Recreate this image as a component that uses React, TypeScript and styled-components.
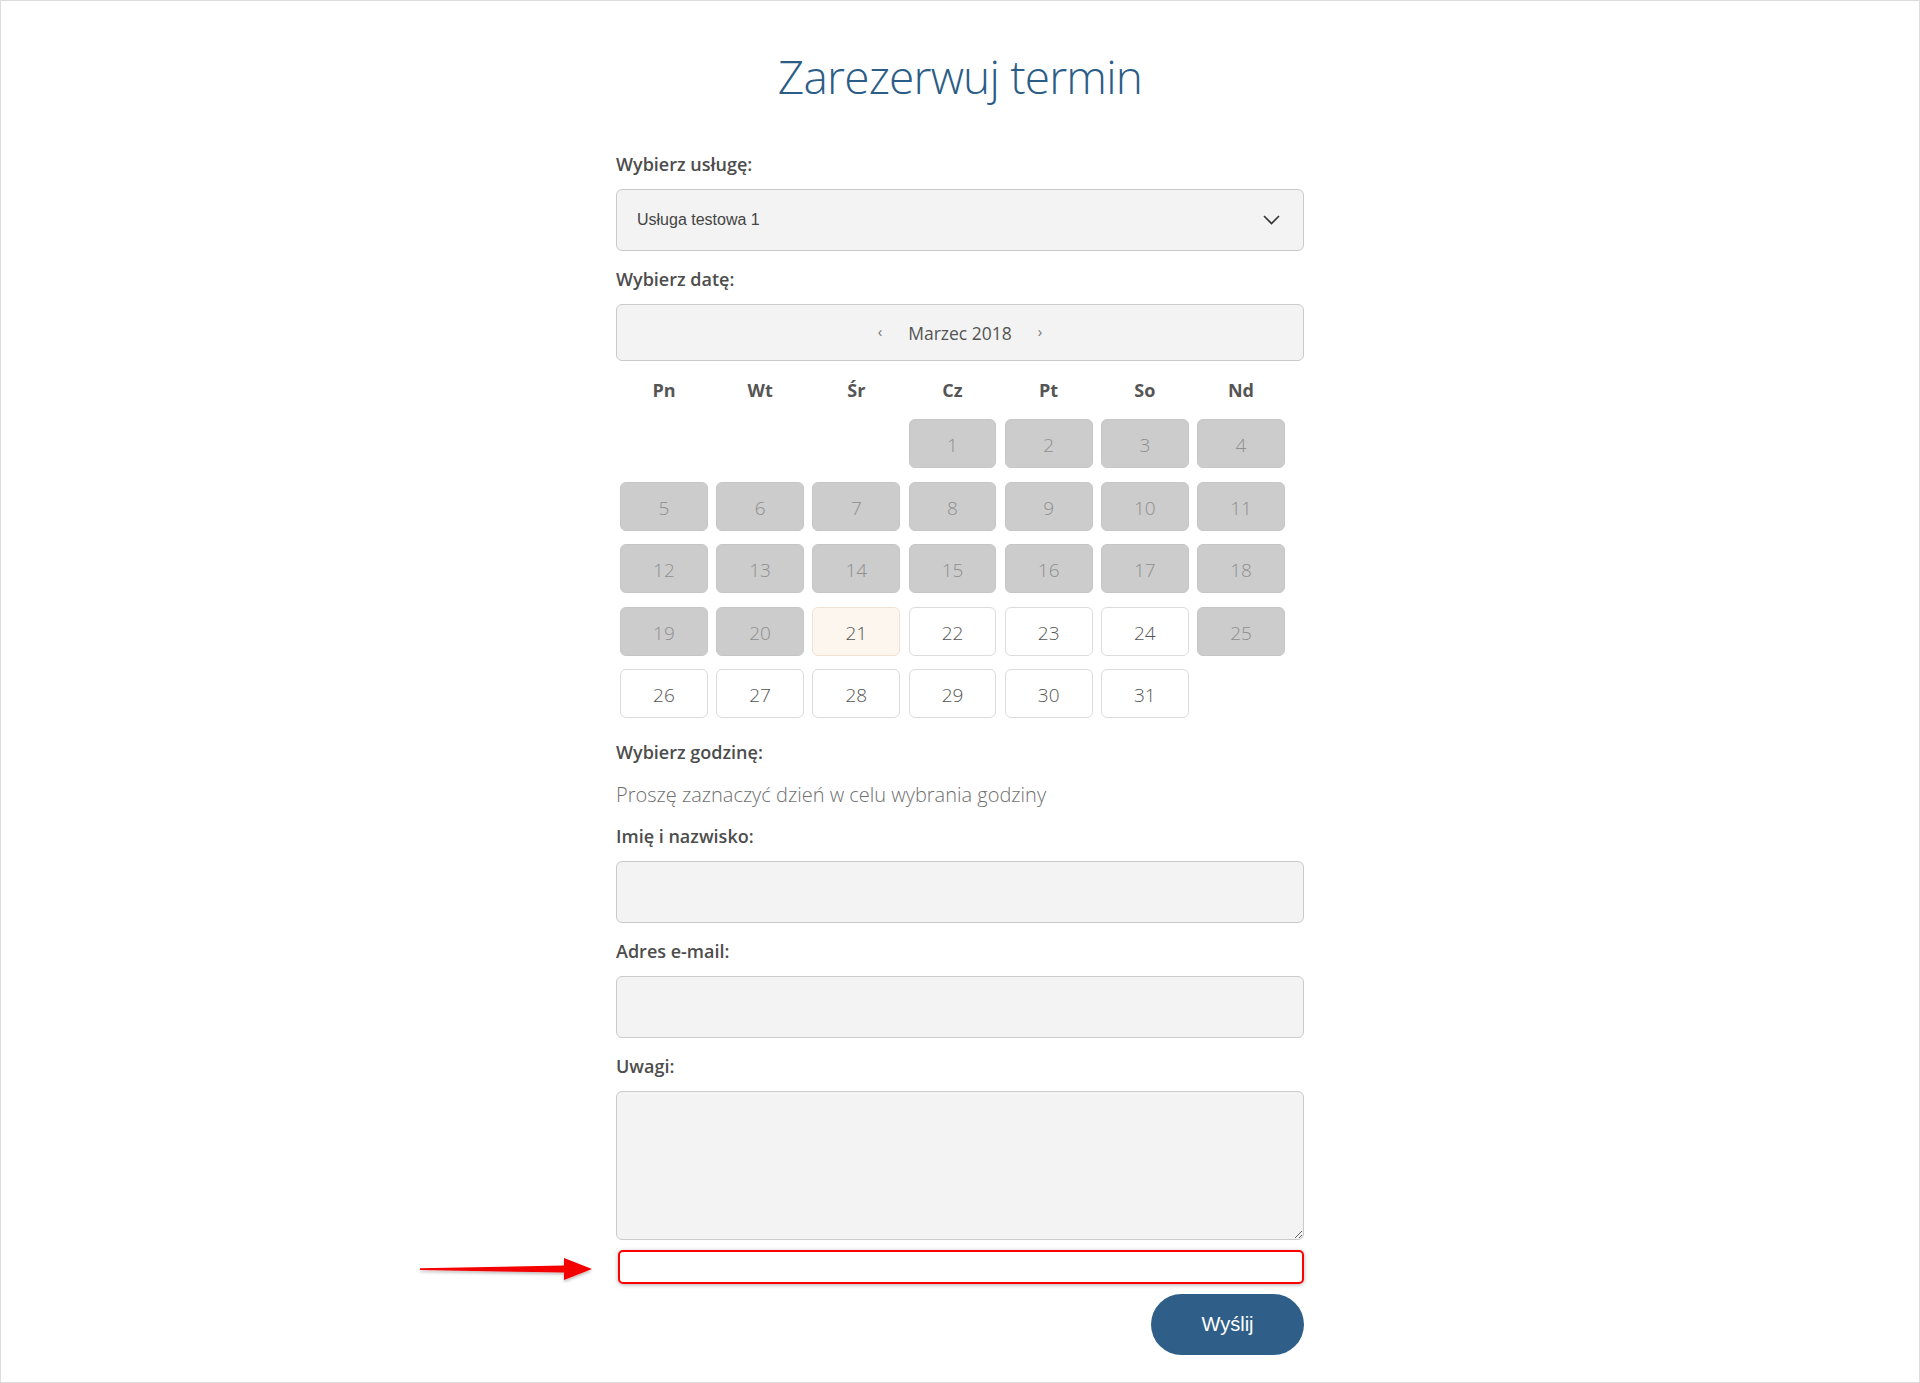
import * as React from "react";
import styled, { createGlobalStyle } from "styled-components";

type DayState = "off" | "today" | "free";

const weekdays = ["Pn", "Wt", "Śr", "Cz", "Pt", "So", "Nd"];

function dayState(day: number): DayState {
  if (day === 21) return "today";
  if (day < 21 || day === 25) return "off";
  return "free";
}

export default function App() {
  const days = Array.from({ length: 31 }, (_, i) => i + 1);

  return (
    <Page>
      <GlobalStyle />
      <Form>
        <Title>Zarezerwuj termin</Title>

        <Label $first>Wybierz usługę:</Label>
        <SelectBox>
          <span>Usługa testowa 1</span>
          <svg width="17" height="10" viewBox="0 0 17 10" fill="none">
            <path d="M1 1l7.5 7.5L16 1" stroke="#333" strokeWidth="1.6" />
          </svg>
        </SelectBox>

        <Label>Wybierz datę:</Label>
        <MonthBar>
          <NavArrow>‹</NavArrow>
          <MonthName>Marzec 2018</MonthName>
          <NavArrow>›</NavArrow>
        </MonthBar>

        <WeekHead>
          {weekdays.map((d) => (
            <WeekDay key={d}>{d}</WeekDay>
          ))}
        </WeekHead>
        <DayGrid>
          {[0, 1, 2].map((i) => (
            <Blank key={"b" + i} />
          ))}
          {days.map((d) => (
            <DayCell key={d} $state={dayState(d)}>
              {d}
            </DayCell>
          ))}
        </DayGrid>

        <Label $afterGrid>Wybierz godzinę:</Label>
        <Hint>Proszę zaznaczyć dzień w celu wybrania godziny</Hint>

        <Label>Imię i nazwisko:</Label>
        <Input type="text" />

        <Label>Adres e-mail:</Label>
        <Input type="email" />

        <Label>Uwagi:</Label>
        <TextArea />

        <MarkedBox>
          <Arrow width="176" height="28" viewBox="0 0 176 28">
            <defs>
              <filter id="sh" x="-10%" y="-40%" width="120%" height="180%">
                <feDropShadow dx="0" dy="2" stdDeviation="1.5" floodColor="#000" floodOpacity="0.25" />
              </filter>
            </defs>
            <path
              d="M2 13.2 L146 10.5 L146 3 L174 14 L146 25 L146 17.5 L2 15 Z"
              fill="#f40000"
              filter="url(#sh)"
            />
          </Arrow>
        </MarkedBox>

        <Actions>
          <SubmitButton type="button">Wyślij</SubmitButton>
        </Actions>
      </Form>
    </Page>
  );
}

const GlobalStyle = createGlobalStyle`
  html, body {
    margin: 0;
    padding: 0;
    background: #fff;
  }
  body {
    font-family: "Open Sans", "Liberation Sans", sans-serif;
  }
  * {
    box-sizing: border-box;
  }
`;

const Page = styled.div`
  min-height: 1383px;
  border: 1px solid #dcdcdc;
  padding-top: 47px;
  background: #fff;
`;

const Form = styled.div`
  width: 688px;
  margin: 0 auto;
`;

const Title = styled.h1`
  margin: 0;
  text-align: center;
  font-family: "Open Sans", sans-serif;
  font-weight: 300;
  font-size: 46px;
  line-height: 56px;
  letter-spacing: -0.8px;
  color: #2b5d87;
`;

const Label = styled.div<{ $first?: boolean; $afterGrid?: boolean }>`
  margin: ${(p) => (p.$first ? "48px" : p.$afterGrid ? "22px" : "16px")} 0 13px;
  font-family: "Open Sans", sans-serif;
  font-weight: 600;
  font-size: 18px;
  line-height: 24px;
  color: #4d4d4d;
`;

const fieldBox = `
  width: 100%;
  background: #f3f3f3;
  border: 1px solid #cacaca;
  border-radius: 6px;
`;

const SelectBox = styled.div`
  ${fieldBox}
  height: 62px;
  display: flex;
  align-items: center;
  justify-content: space-between;
  padding: 0 23px 0 20px;
  font-family: "Liberation Sans", Arial, sans-serif;
  font-size: 16px;
  color: #444;
`;

const MonthBar = styled.div`
  ${fieldBox}
  height: 57px;
  display: flex;
  align-items: center;
  justify-content: center;
  gap: 26px;
`;

const MonthName = styled.span`
  font-size: 17.5px;
  color: #555;
`;

const NavArrow = styled.span`
  font-size: 15px;
  color: #777;
  line-height: 1;
  padding-bottom: 2px;
`;

const WeekHead = styled.div`
  width: 673px;
  margin-top: 15px;
  display: grid;
  grid-template-columns: repeat(7, 1fr);
`;

const WeekDay = styled.div`
  text-align: center;
  font-weight: 700;
  font-size: 18px;
  line-height: 24px;
  color: #555;
  padding-top: 2px;
`;

const DayGrid = styled.div`
  width: 673px;
  margin-top: 17px;
  padding: 0 4px;
  display: grid;
  grid-template-columns: repeat(7, 1fr);
  column-gap: 8.3px;
  row-gap: 13.5px;
`;

const Blank = styled.div`
  height: 49px;
`;

const DayCell = styled.div<{ $state: DayState }>`
  height: 49px;
  display: flex;
  align-items: center;
  justify-content: center;
  border-radius: 6px;
  font-weight: 300;
  font-size: 19px;
  padding-top: 3px;
  border: 1px solid
    ${(p) => (p.$state === "off" ? "#c6c6c6" : p.$state === "today" ? "#eee2d4" : "#dcdcdc")};
  background: ${(p) => (p.$state === "off" ? "#cccccc" : p.$state === "today" ? "#fdf6ee" : "#fff")};
  color: ${(p) => (p.$state === "off" ? "#8f8f8f" : "#555")};
`;

const Hint = styled.div`
  margin: 18px 0 5px;
  font-weight: 300;
  font-size: 20px;
  line-height: 26px;
  color: #6f6f6f;
`;

const Input = styled.input`
  ${fieldBox}
  display: block;
  height: 62px;
  margin: 0;
  padding: 0 20px;
  font-size: 16px;
  outline: none;
`;

const TextArea = styled.textarea`
  ${fieldBox}
  display: block;
  height: 149px;
  margin: 0;
  padding: 14px 20px;
  font-size: 16px;
  outline: none;
  resize: vertical;
`;

const MarkedBox = styled.div`
  position: relative;
  width: 686px;
  height: 34px;
  margin: 10px 0 0 2px;
  border: 2px solid #f00;
  border-radius: 5px;
  background: #fff;
  box-shadow: 0 1px 4px rgba(0, 0, 0, 0.3);
`;

const Arrow = styled.svg`
  position: absolute;
  left: -202px;
  top: 3px;
`;

const Actions = styled.div`
  display: flex;
  justify-content: flex-end;
  margin-top: 10px;
`;

const SubmitButton = styled.button`
  width: 153px;
  height: 61px;
  border: none;
  border-radius: 31px;
  background: #2f5f88;
  color: #fff;
  font-family: "Liberation Sans", Arial, sans-serif;
  font-size: 20px;
  cursor: pointer;
`;
